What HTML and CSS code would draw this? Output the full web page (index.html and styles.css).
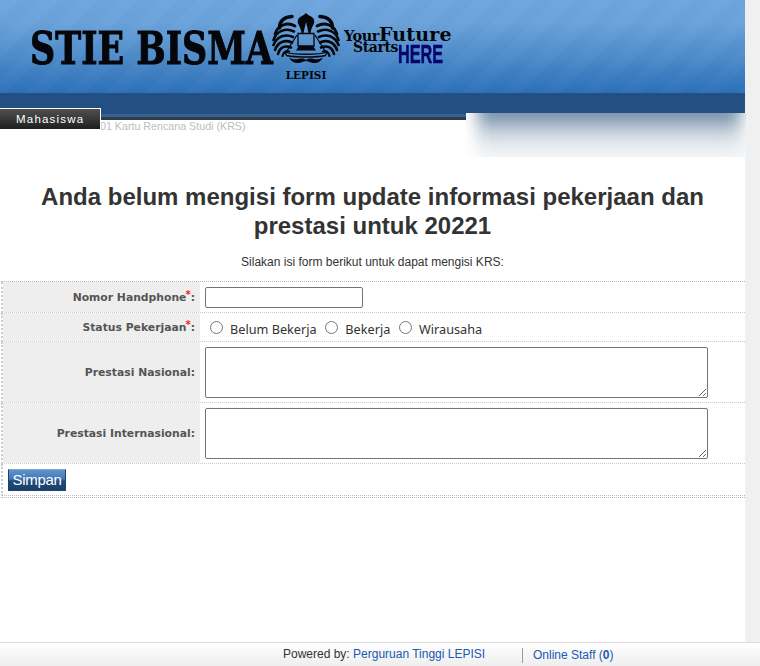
FILE: index.html
```html
<!DOCTYPE html>
<html lang="id">
<head>
<meta charset="utf-8">
<title>STIE BISMA</title>
<link rel="stylesheet" href="styles.css">
</head>
<body>
<div class="shell">
  <div class="page">
    <header class="banner">
      <div class="brand">
        <div class="brand-box"><span class="brand-name">STIE BISMA</span></div>
        <div class="emblem">
          <svg class="emblem-svg" viewBox="0 0 68 52" width="68" height="52" aria-hidden="true">
            <defs>
              <g id="wing" fill="none" stroke="#05060a" stroke-linecap="round">
                <path stroke-width="3.6" d="M20 3.5C11 4 7.5 9 7.5 15"/>
                <path stroke-width="2.8" d="M23 13C15 8.5 6 12 3 21"/>
                <path stroke-width="2.6" d="M22 18.5C14 14.5 4 18 1.5 27"/>
                <path stroke-width="2.6" d="M21 24C14 20.5 5 23 1.5 32"/>
                <path stroke-width="2.6" d="M20 29.500C13 26.500 6 28.500 3 37"/>
                <path stroke-width="2.6" d="M19 34.500C13 32 8 34 6 41"/>
                <path stroke-width="2.200" d="M17 38.500C14 37.500 11.500 39 10.500 43"/>
              </g>
            </defs>
            <use href="#wing"/>
            <use href="#wing" transform="matrix(-1 0 0 1 68 0)"/>
            <path fill="#05060a" d="M34 0c1.500 1.500 3 2.500 5 3.500 3.500 2 4 5 2.500 8-1.500 2.500-2.500 5-3 8.500h-2L34 9l-2.500 11h-2c-.5-3.500-1.500-6-3-8.500-1.500-3-1-6 2.500-8 2-1 3.500-2 5-3.500z"/>
            <g fill="none" stroke="#05060a" stroke-width="1.300">
              <path d="M26 20.500h16v12.500H26z"/>
              <path d="M25 22 14.500 38.500M43 22l10.500 16.500"/>
              <path d="M13 39c8 3 34 3 42 0l-1.500 3.500c-9 2-30 2-39 0z"/>
            </g>
            <path fill="#05060a" d="M27 33h14l3 4.500H24z"/>
            <path fill="#05060a" d="M17 44.500c5 3.500 10 .5 14 1 1.500.2 2.200 1 3 1.500.8-.5 1.500-1.300 3-1.500 4-.5 9 2.500 14-1-2.500 5-7.500 6.500-12 5-2-.7-3.500-1.500-5-1.500s-3 .8-5 1.500c-4.500 1.500-9.500 0-12-5z"/>
          </svg>
          <span class="emblem-name">LEPISI</span>
        </div>
        <div class="tagline">
          <div class="tag-top"><span class="tag-your">Your</span><span class="tag-future">Future</span></div>
          <div class="tag-bottom"><span class="tag-starts">Starts</span><span class="tag-here">HERE</span></div>
        </div>
      </div>
    </header>
    <nav class="nav-band"></nav>
    <div class="crumb-row">
      <span class="crumb">01 Kartu Rencana Studi (KRS)</span>
      <span class="tab">Mahasiswa</span>
      <div class="blur-box"></div>
    </div>
    <main class="content">
      <h1 class="title">Anda belum mengisi form update informasi pekerjaan dan prestasi untuk 20221</h1>
      <p class="lead">Silakan isi form berikut untuk dapat mengisi KRS:</p>
      <form class="form">
        <div class="row row-phone">
          <label class="label">Nomor Handphone<sup class="req">*</sup>:</label>
          <div class="field"><input class="text-input" type="text"></div>
        </div>
        <div class="row row-status">
          <label class="label">Status Pekerjaan<sup class="req">*</sup>:</label>
          <div class="field radios">
            <label class="radio"><input type="radio" name="status">Belum Bekerja</label>
            <label class="radio"><input type="radio" name="status">Bekerja</label>
            <label class="radio"><input type="radio" name="status">Wirausaha</label>
          </div>
        </div>
        <div class="row row-area">
          <label class="label">Prestasi Nasional:</label>
          <div class="field"><textarea class="area"></textarea></div>
        </div>
        <div class="row row-area">
          <label class="label">Prestasi Internasional:</label>
          <div class="field"><textarea class="area"></textarea></div>
        </div>
        <div class="row-submit"><button class="submit" type="button">Simpan</button></div>
      </form>
    </main>
  </div>
  <div class="gutter"></div>
</div>
<footer class="footer">
  <span class="powered">Powered by: <a class="link" href="#">Perguruan Tinggi LEPISI</a></span>
  <span class="staff"><a class="link" href="#">Online Staff (<b>0</b>)</a></span>
</footer>
</body>
</html>
```

FILE: styles.css
```css
* { box-sizing: border-box; }
html, body { margin: 0; height: 666px; overflow: hidden; background: #fff; }
body { display: flex; flex-direction: column; font-family: "Liberation Sans", Arial, sans-serif; color: #333; }
.shell { display: flex; height: 642px; }
.page { width: 745px; flex: none; }
.gutter { flex: 1; background: #f0f0f0; }

.banner {
  height: 93px;
  background:
    repeating-linear-gradient(135deg, rgba(255,255,255,.015) 0 14px, rgba(0,0,0,.01) 14px 28px),
    linear-gradient(#6ea6dd 0, #6aa2da 25%, #4f8cca 60%, #2c71b8 100%);
  padding: 13px 0 0 30px;
}
.brand { display: flex; align-items: flex-start; }
.brand-box { width: 242px; flex: none; padding-top: 11px; }
.brand-name {
  display: inline-block;
  font-family: "DejaVu Serif", serif;
  font-weight: 700;
  font-size: 45px;
  line-height: 50px;
  color: #05060a;
  white-space: nowrap;
  -webkit-text-stroke: 1px #05060a;
  transform: scaleX(.775);
  transform-origin: left top;
}
.emblem { width: 68px; flex: none; display: flex; flex-direction: column; align-items: center; }
.emblem-svg { display: block; }
.emblem-name {
  font-family: "DejaVu Serif", serif;
  font-weight: 700;
  font-size: 10.5px;
  line-height: 12px;
  margin-top: 4px;
  color: #05060a;
}
.tagline { margin: 14px 0 0 4px; font-family: "DejaVu Serif", serif; font-weight: 700; color: #05060a; }
.tag-top { display: flex; align-items: baseline; height: 14px; }
.tag-your { font-size: 14.5px; line-height: 14px; letter-spacing: -.5px; }
.tag-future { font-size: 19px; line-height: 14px; letter-spacing: .2px; }
.tag-bottom { display: flex; align-items: flex-start; margin-left: 9px; }
.tag-starts { font-size: 14px; line-height: 13px; letter-spacing: -.4px; }
.tag-here {
  font-family: "Liberation Sans", sans-serif;
  font-size: 26px;
  line-height: 22px;
  color: #04046e;
  -webkit-text-stroke: .5px #04046e;
  transform: scaleX(.625);
  transform-origin: left top;
  margin-top: 2px;
}

.nav-band {
  height: 27px;
  background: linear-gradient(#234f82 0, #234f82 78%, #3a6090 78%, #3a6090 89%, #2f3f4c 89%, #2b3a44 100%);
}

.crumb-row { position: relative; height: 37px; }
.crumb { position: absolute; left: 100px; top: 0; font-size: 10.7px; line-height: 13px; color: #bdbdbd; white-space: nowrap; }
.tab {
  position: absolute;
  left: 0;
  top: -12px;
  width: 101px;
  height: 21px;
  background: linear-gradient(#505050, #1e1e1e);
  border-top: 1px solid #fff;
  border-right: 1px solid #fff;
  color: #fff;
  font-size: 11.5px;
  line-height: 20px;
  letter-spacing: 1.2px;
  padding-left: 16px;
}
.blur-box {
  position: absolute;
  left: 466px;
  top: -7px;
  width: 280px;
  height: 44px;
  overflow: hidden;
  background: linear-gradient(90deg, #fff 0, #f5f8fa 34px);
}
.blur-box::before {
  content: "";
  position: absolute;
  left: 12px;
  right: 6px;
  top: -15px;
  height: 60px;
  background: linear-gradient(#6a86a4 0, #6f8aa6 25%, #b5c3cf 48%, #e0e6eb 70%, #f5f8fa 100%);
  filter: blur(8px);
}

.content { padding-top: 25px; }
.title {
  margin: 0 auto;
  width: 680px;
  text-align: center;
  font-size: 24px;
  line-height: 29px;
  font-weight: 700;
  color: #333;
}
.lead { margin: 15px 0 0; height: 26px; text-align: center; font-size: 12px; line-height: 14px; color: #333; }

.form { margin: 0 0 0 1px; border-top: 1px dotted #bbb; border-bottom: 1px dotted #bbb; padding-bottom: 1px; }
.row { display: flex; border-bottom: 1px dotted #ccc; border-left: 2px dotted #ccc; }
.row-phone { height: 31px; }
.row-status { height: 29px; }
.row-area { height: 61px; }
.label {
  width: 197px;
  flex: none;
  background: #eee;
  display: flex;
  align-items: center;
  justify-content: flex-end;
  padding-right: 5px;
  font-family: "DejaVu Sans", sans-serif;
  font-size: 10.8px;
  font-weight: 700;
  color: #555;
}
.req { color: #e22; font-size: 10px; line-height: 0; margin: -5px 0 0 -1px; align-self: center; }
.field { padding: 5px 0 0 5px; }
.text-input {
  display: block;
  width: 158px;
  height: 21px;
  margin: 0;
  background: #fff;
  border: 1px solid #767676;
  border-radius: 2px;
}
.radios { display: flex; padding-top: 7px; padding-left: 10px; gap: 8.7px; }
.radio {
  display: flex;
  align-items: center;
  font-family: "Noto Sans", sans-serif;
  font-size: 12.7px;
  line-height: 18px;
  color: #333;
  height: 18px;
}
.radio input { margin: -3px 7px 0 0; width: 13px; height: 13px; }
.area {
  display: block;
  width: 503px;
  height: 51px;
  margin: 0;
  background: #fff;
  border: 1px solid #767676;
  border-radius: 2px;
}
.row-submit { height: 32px; padding: 5px 0 0 5px; border-left: 2px dotted #ccc; border-bottom: 1px dotted #bbb; }
.submit {
  display: block;
  width: 58px;
  height: 22px;
  padding: 0;
  border: 1px solid #1d426e;
  border-top-color: #7fa6d3;
  background: linear-gradient(#5f93cc 0, #4279b5 45%, #1f4b7c 55%, #1a3f6b 100%);
  color: #fff;
  font-family: "Liberation Sans", sans-serif;
  font-size: 15px;
  letter-spacing: -.3px;
  line-height: 20px;
}

.footer {
  height: 24px;
  flex: none;
  display: flex;
  border-top: 1px solid #ddd;
  background: linear-gradient(#fff, #eee);
  font-size: 12px;
  color: #333;
}
.powered { margin-left: 283px; width: 239px; line-height: 22px; }
.staff { border-left: 1px solid #999; height: 15px; margin-top: 5px; padding-left: 10px; line-height: 15px; }
.link { color: #2059b0; text-decoration: none; }
```
